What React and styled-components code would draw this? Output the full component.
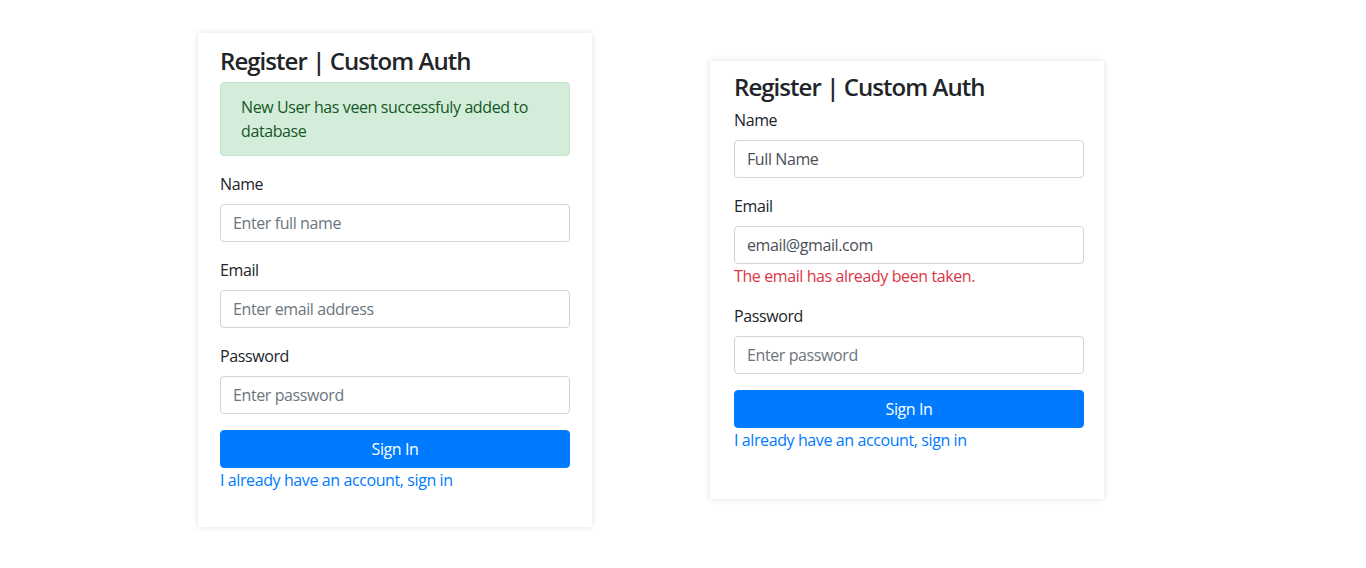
import React from "react";
import styled, { createGlobalStyle } from "styled-components";

const Global = createGlobalStyle`
  * { box-sizing: border-box; }
  body {
    margin: 0;
    background: #fff;
    font-family: "Open Sans", "Noto Sans", "Liberation Sans", sans-serif;
    font-size: 16px;
    line-height: 1.5;
    letter-spacing: -0.4px;
    color: #212529;
  }
`;

const Page = styled.div`
  display: flex;
  align-items: center;
  height: 560px;
  padding-left: 198px;
  gap: 118px;
`;

const Card = styled.div`
  width: 394px;
  background: #fff;
  box-shadow: 0 0 6px rgba(0, 0, 0, 0.12);
  padding: ${(p) => p.$pad};
`;

const Title = styled.h4`
  margin: 0 0 6px;
  padding-top: 2px;
  font-size: 24px;
  font-weight: 600;
  line-height: 1.2;
  color: #212529;
  letter-spacing: -0.95px;
`;

const Alert = styled.div`
  background: #d4edda;
  border: 1px solid #c3e6cb;
  color: #155724;
  border-radius: 4px;
  padding: 12px 20px;
  margin-bottom: 16px;
`;

const Group = styled.div`
  margin-bottom: 16px;
`;

const Label = styled.label`
  display: block;
  margin-bottom: 8px;
`;

const Input = styled.input`
  display: block;
  width: 100%;
  height: 38px;
  padding: 6px 12px;
  font: inherit;
  letter-spacing: inherit;
  color: #495057;
  background: #fff;
  border: 1px solid #ced4da;
  border-radius: 4px;
  outline: none;
  &::placeholder {
    color: #6c757d;
    opacity: 1;
  }
`;

const Error = styled.div`
  color: #dc3545;
`;

const Button = styled.button`
  display: block;
  width: 100%;
  height: 38px;
  font: inherit;
  letter-spacing: inherit;
  color: #fff;
  background: #007bff;
  border: 1px solid #007bff;
  border-radius: 4px;
  padding: 6px 12px;
  cursor: pointer;
`;

const Link = styled.a`
  display: block;
  color: #007bff;
  text-decoration: none;
`;

function Field({ label, placeholder, value, type = "text", error }) {
  return (
    <Group>
      <Label>{label}</Label>
      <Input type={type} placeholder={placeholder} defaultValue={value} />
      {error && <Error>{error}</Error>}
    </Group>
  );
}

export default function App() {
  return (
    <>
      <Global />
      <Page>
        <Card $pad="12px 22px 35px 22px">
          <Title>Register | Custom Auth</Title>
          <Alert>New User has veen successfuly added to database</Alert>
          <Field label="Name" placeholder="Enter full name" />
          <Field label="Email" placeholder="Enter email address" />
          <Field label="Password" placeholder="Enter password" type="password" />
          <Button>Sign In</Button>
          <Link href="#">I already have an account, sign in</Link>
        </Card>
        <Card $pad="10px 20px 47px 24px">
          <Title>Register | Custom Auth</Title>
          <Field label="Name" value="Full Name" />
          <Field
            label="Email"
            value="email@gmail.com"
            error="The email has already been taken."
          />
          <Field label="Password" placeholder="Enter password" type="password" />
          <Button>Sign In</Button>
          <Link href="#">I already have an account, sign in</Link>
        </Card>
      </Page>
    </>
  );
}
